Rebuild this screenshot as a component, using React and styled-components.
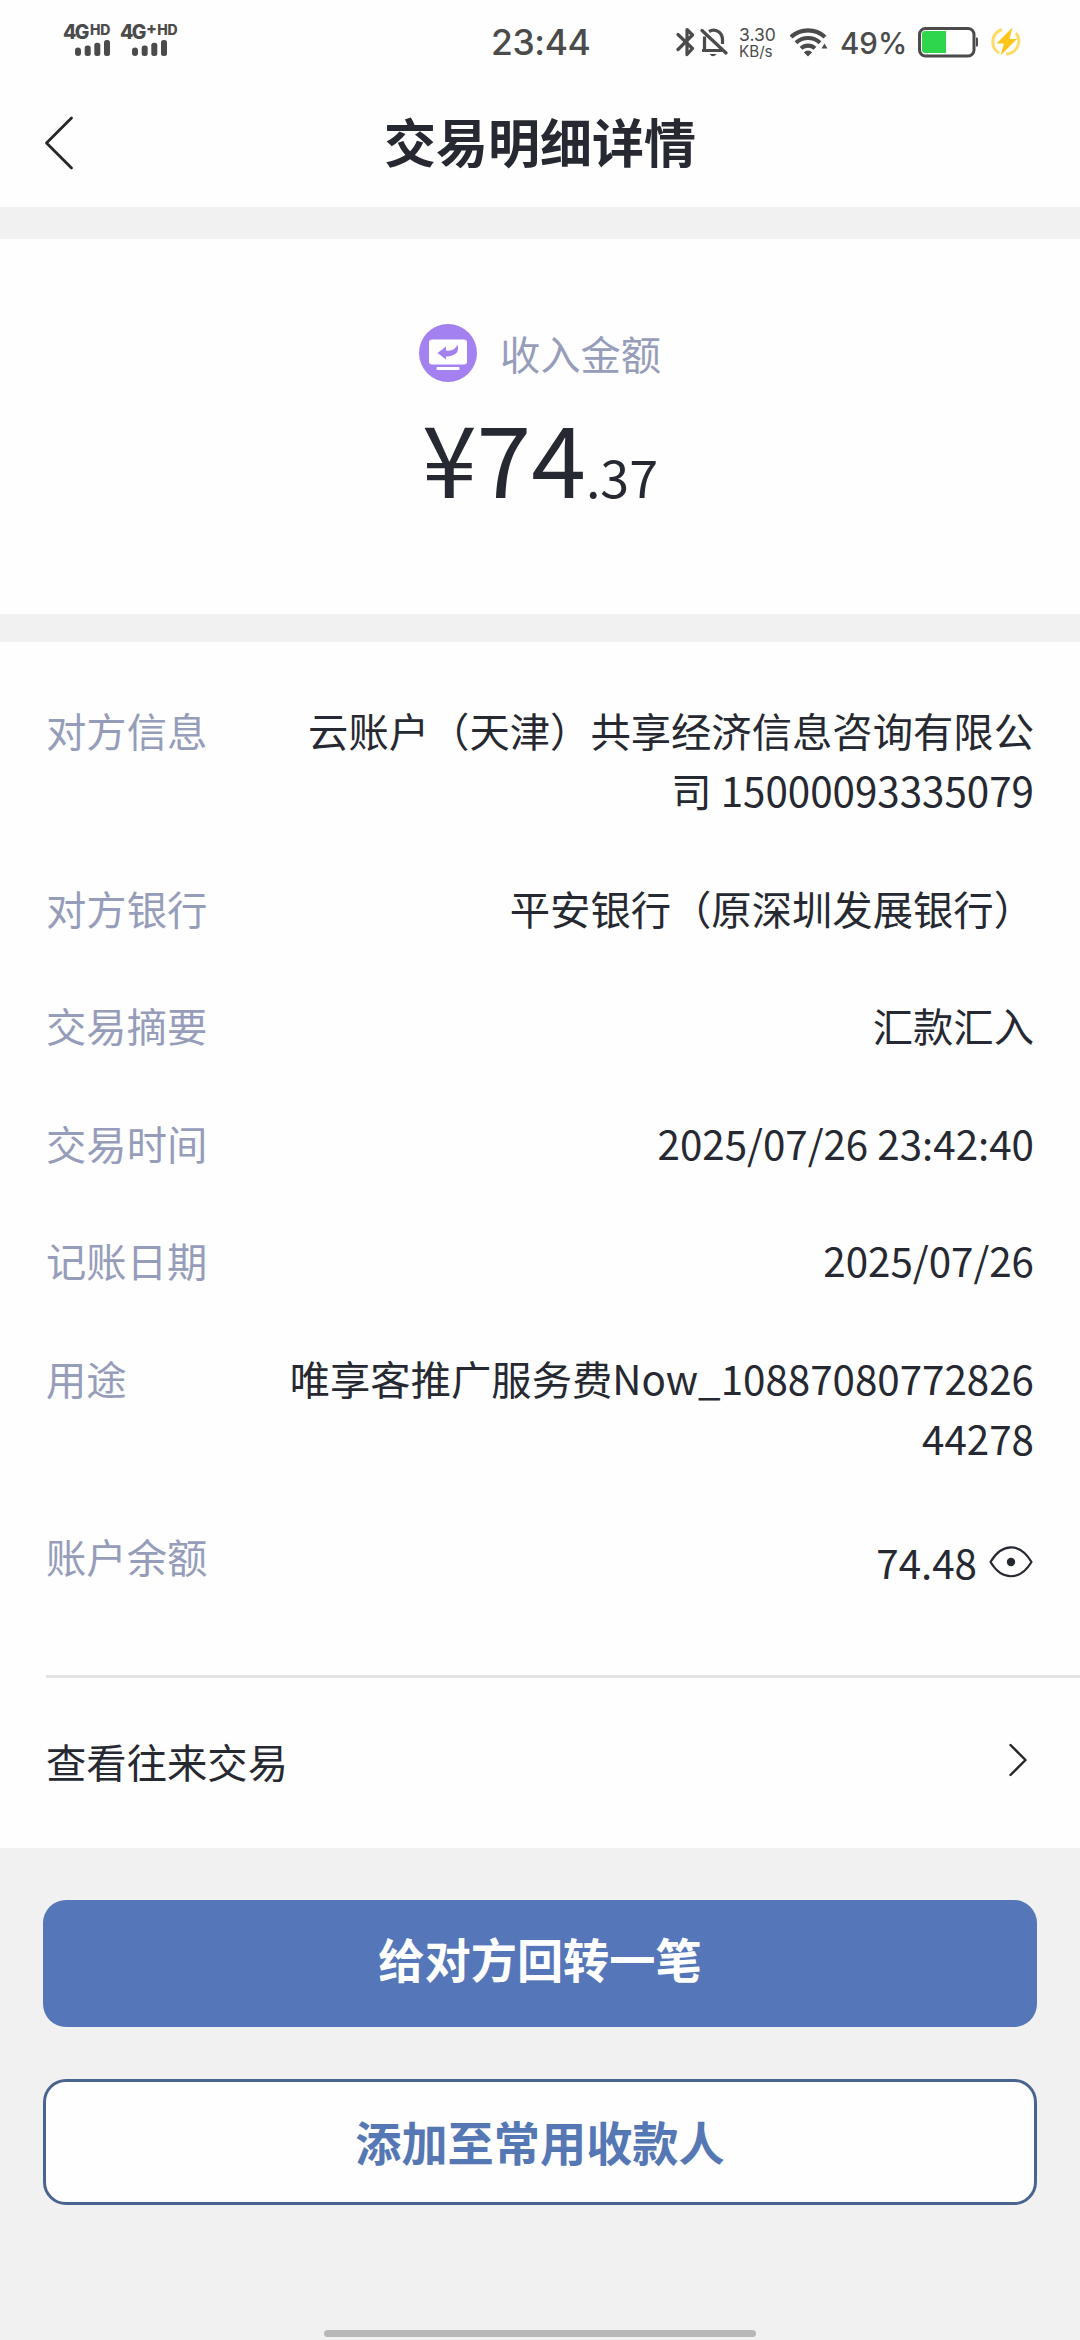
import React from 'react';
import styled, { createGlobalStyle } from 'styled-components';

const GlobalStyle = createGlobalStyle`
  * {
    box-sizing: border-box;
  }

  body {
    margin: 0;
    background: #f1f1f1;
    color: #262931;
    font-family: 'Noto Sans CJK SC', sans-serif;
  }
`;

const Page = styled.div`
  display: flex;
  flex-direction: column;
  height: 2340px;
  background: #f1f1f1;
`;

const StatusBar = styled.div`
  display: flex;
  height: 78px;
  padding: 24px 57px 0 63px;
  background: #fefefe;
  color: #4b4b4b;
  font-family: Inter, sans-serif;
`;

const StatusGroup = styled.div`
  display: flex;
  flex: none;
  align-items: flex-start;
`;

const Sim = styled.div`
  width: 57px;
`;

const Network = styled.div`
  display: flex;
  height: 16px;
  font-size: 19.5px;
  font-weight: 800;
  line-height: 17px;
  letter-spacing: -1.6px;
  white-space: nowrap;
`;

const Small = styled.span`
  margin-left: 2px;
  font-size: 14px;
  line-height: 12px;
  letter-spacing: -0.2px;
`;

const Plus = styled.span`
  margin-left: 1px;
  font-size: 16px;
  line-height: 9px;
`;

const SignalBars = styled.svg`
  display: block;
  margin-left: 12px;
`;

const Clock = styled.div`
  margin: 0 auto 0 314px;
  font-size: 35.5px;
  font-weight: 500;
  line-height: 38px;
  letter-spacing: -0.4px;
  white-space: nowrap;
`;

const Speed = styled.div`
  display: flex;
  flex-direction: column;
  width: 37px;
  margin: 3px 14px 0 11px;
  font-size: 17.5px;
  line-height: 15px;
`;

const SpeedUnit = styled.span`
  margin-top: 2px;
  font-size: 15.2px;
  line-height: 16px;
`;

const Percent = styled.div`
  width: 65px;
  margin: 0 13px 0 12px;
  font-size: 29.5px;
  font-weight: 500;
  line-height: 38px;
`;

const Header = styled.header`
  display: grid;
  grid-template-columns: 160px 1fr 160px;
  height: 129px;
  padding-top: 27px;
  background: #fefefe;
`;

const BackButton = styled.button`
  display: flex;
  width: 120px;
  height: 78px;
  padding: 11px 0 0 43px;
  border: 0;
  background: none;
`;

const Title = styled.h1`
  margin: 0;
  font-size: 52px;
  font-weight: 700;
  line-height: 72px;
  text-align: center;
`;

const Summary = styled.section`
  display: flex;
  flex-direction: column;
  align-items: center;
  height: 375px;
  margin-top: 32px;
  padding-top: 84px;
  background: #fefefe;
`;

const SummaryLabel = styled.div`
  display: flex;
  align-items: center;
  gap: 23px;
  height: 60px;
  color: #969dba;
  font-size: 40.3px;
  line-height: 60px;
`;

const Amount = styled.div`
  margin-top: 7px;
  font-size: 98.5px;
  line-height: 130px;
`;

const Cents = styled.span`
  font-size: 52px;
`;

const Details = styled.section`
  margin-top: 28px;
  padding-top: 58px;
  background: #fefefe;
`;

const List = styled.dl`
  display: flex;
  flex-direction: column;
  gap: 57.6px;
  height: 978px;
  margin: 0 0 0 46px;
  padding-right: 46px;
  border-bottom: 3px solid #e3e3e3;
`;

const Row = styled.div`
  display: flex;
  justify-content: space-between;
  font-size: 40.35px;
  line-height: 60px;
`;

const Label = styled.dt`
  color: #969dba;
`;

const Value = styled.dd`
  width: 750px;
  margin: 0;
  text-align: right;
  word-break: break-all;
`;

const Balance = styled(Value)`
  display: flex;
  justify-content: flex-end;
  gap: 11px;
  padding-top: 6px;
`;

const EyeIcon = styled.svg`
  margin-top: 13px;
`;

const HistoryLink = styled.div`
  display: flex;
  justify-content: space-between;
  height: 170px;
  padding: 53px 53px 0 46px;
  font-size: 40.35px;
  line-height: 60px;
`;

const Chevron = styled.svg`
  margin-top: 12px;
`;

const Actions = styled.div`
  display: flex;
  flex-direction: column;
  gap: 52px;
  padding: 52px 43px 0;
`;

const Button = styled.button`
  height: ${({ $outlined }) => ($outlined ? '126px' : '127px')};
  padding: 0 0 ${({ $outlined }) => ($outlined ? '3px' : '11px')};
  border: ${({ $outlined }) => ($outlined ? '3px solid #4a6490' : '0')};
  border-radius: 23px;
  background: ${({ $outlined }) => ($outlined ? '#fefefe' : '#5577b9')};
  color: ${({ $outlined }) => ($outlined ? '#5577b4' : '#fff')};
  font-family: inherit;
  font-size: 46.2px;
  font-weight: 700;
  line-height: 66px;
`;

const HomeIndicator = styled.div`
  width: 432px;
  height: 7px;
  margin: auto auto 3px;
  border-radius: 4px;
  background: #b8b8b8;
`;

const details = [
  { label: '对方信息', value: '云账户（天津）共享经济信息咨询有限公司 15000093335079' },
  { label: '对方银行', value: '平安银行（原深圳发展银行）' },
  { label: '交易摘要', value: '汇款汇入' },
  { label: '交易时间', value: '2025/07/26 23:42:40' },
  { label: '记账日期', value: '2025/07/26' },
  { label: '用途', value: '唯享客推广服务费Now_1088708077282644278' },
];

const Signal = () => (
  <SignalBars width="35" height="16" viewBox="0 0 35 16" fill="#4b4b4b">
    <rect x="0" y="7.5" width="6" height="8.5" rx="3" />
    <rect x="9.7" y="5.5" width="6" height="10.5" rx="2.5" />
    <rect x="19.3" y="2.8" width="6" height="13.2" rx="2.5" />
    <rect x="29" y="0" width="6" height="16" rx="2.5" />
  </SignalBars>
);

const BluetoothIcon = () => (
  <svg width="20" height="36" viewBox="0 0 20 36" fill="none" stroke="#4b4b4b" strokeWidth="3.2" strokeLinejoin="round" strokeLinecap="round">
    <path d="M2 10.5 16.5 24.5 11 30.5V5.5L16.5 11 2 25.5" />
  </svg>
);

const MutedIcon = () => (
  <svg width="32" height="36" viewBox="0 0 32 36" fill="none" stroke="#4b4b4b" strokeWidth="3.2">
    <path d="M8.5 12.5V26M6 26.5H26M13 7.5C19 4 26.5 8 26.5 16V20" />
    <path d="M6 6.5 30 29" strokeLinecap="round" />
    <path d="M13.5 30H20.5Q17 34.5 13.5 30Z" fill="#4b4b4b" stroke="none" />
  </svg>
);

const WifiIcon = () => (
  <svg width="38" height="36" viewBox="0 0 38 36" fill="none" stroke="#4b4b4b" strokeWidth="4.2">
    <path d="M1 13C10.5 4.2 25.5 4.2 35 13" />
    <path d="M6 18.7C12.8 12.4 23.2 12.4 30 18.7" />
    <path d="M11 24.3C15 20.6 21 20.6 25 24.3" />
    <path d="M13.8 28.2Q18 24.8 22.2 28.2L18 32.5Z" fill="#4b4b4b" stroke="none" />
    <path d="M31.5 24.5 34.5 19.5 37.5 24.5Z" fill="#4b4b4b" stroke="none" />
  </svg>
);

const BatteryIcon = () => (
  <svg width="61" height="36" viewBox="0 0 61 36">
    <rect x="1.5" y="4.5" width="54.5" height="27.5" rx="6" fill="#fff" stroke="#4b4b4b" strokeWidth="3" />
    <path d="M7 7H28V29H7Q4 29 4 26V10Q4 7 7 7Z" fill="#2dd64b" />
    <path d="M58 13.5H59Q60 13.5 60 15V21Q60 22.5 59 22.5H58Z" fill="#4b4b4b" />
  </svg>
);

const ChargeIcon = () => (
  <svg width="44" height="36" viewBox="-3 0 44 36">
    <path d="M20 5.5A13 13 0 0 0 17 29" fill="none" stroke="#ffdc67" strokeWidth="3" />
    <path d="M34 9A13 13 0 0 1 24 30" fill="none" stroke="#ffdc67" strokeWidth="3" />
    <path d="M30.5 3.5 14.5 19.5H22L18.5 31.5 35 15H27.5Z" fill="#fdc51b" />
  </svg>
);

const IncomeIcon = () => (
  <svg width="58" height="58" viewBox="0 0 58 58">
    <circle cx="29" cy="29" r="29" fill="#a481f1" />
    <rect x="10" y="15.5" width="38" height="25" rx="3" fill="#fff" />
    <path d="M18.500 29 27 22.500V26.500Q36 27.500 38.500 20.500Q41.500 32 27 32.500V35.500Z" fill="#a481f1" />
    <rect x="17.5" y="43" width="23" height="3" rx="1" fill="#fff" />
  </svg>
);

const App = () => (
  <>
    <GlobalStyle />
    <Page>
      <StatusBar>
        <StatusGroup>
          <Sim>
            <Network>
              4G<Small>HD</Small>
            </Network>
            <Signal />
          </Sim>
          <Sim>
            <Network>
              4G<Plus>+</Plus>
              <Small>HD</Small>
            </Network>
            <Signal />
          </Sim>
        </StatusGroup>
        <Clock>23:44</Clock>
        <StatusGroup>
          <BluetoothIcon />
          <MutedIcon />
          <Speed>
            <span>3.30</span>
            <SpeedUnit>KB/s</SpeedUnit>
          </Speed>
          <WifiIcon />
          <Percent>49%</Percent>
          <BatteryIcon />
          <ChargeIcon />
        </StatusGroup>
      </StatusBar>

      <Header>
        <BackButton aria-label="返回">
          <svg width="32" height="54" viewBox="0 0 32 54" fill="none" stroke="#262626" strokeWidth="2.8" strokeLinecap="round" strokeLinejoin="round">
            <path d="M28.5 2 3.5 27 28.5 52" />
          </svg>
        </BackButton>
        <Title>交易明细详情</Title>
      </Header>

      <Summary>
        <SummaryLabel>
          <IncomeIcon />
          收入金额
        </SummaryLabel>
        <Amount>
          ¥74<Cents>.37</Cents>
        </Amount>
      </Summary>

      <Details>
        <List>
          {details.map(({ label, value }) => (
            <Row key={label}>
              <Label>{label}</Label>
              <Value>{value}</Value>
            </Row>
          ))}
          <Row>
            <Label>账户余额</Label>
            <Balance>
              74.48
              <EyeIcon width="46" height="34" viewBox="0 0 46 34" fill="none" stroke="#262931" strokeWidth="2.2" strokeLinejoin="round">
                <path d="M2.5 17C14 -2.5 32 -2.5 43.5 17C32 36 14 36 2.5 17Z" />
                <circle cx="23" cy="17" r="4.2" fill="#262931" stroke="none" />
              </EyeIcon>
            </Balance>
          </Row>
        </List>
        <HistoryLink>
          查看往来交易
          <Chevron width="19" height="34" viewBox="0 0 19 34" fill="none" stroke="#262626" strokeWidth="2.4" strokeLinecap="round" strokeLinejoin="round">
            <path d="M2.5 2 17.5 17 2.5 32" />
          </Chevron>
        </HistoryLink>
      </Details>

      <Actions>
        <Button>给对方回转一笔</Button>
        <Button $outlined>添加至常用收款人</Button>
      </Actions>

      <HomeIndicator />
    </Page>
  </>
);

export default App;
